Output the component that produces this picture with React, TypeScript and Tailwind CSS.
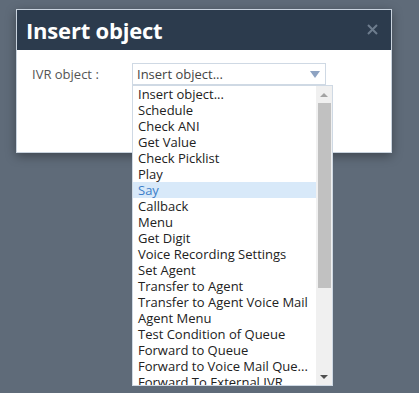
const OPTIONS = [
  "Insert object...",
  "Schedule",
  "Check ANI",
  "Get Value",
  "Check Picklist",
  "Play",
  "Say",
  "Callback",
  "Menu",
  "Get Digit",
  "Voice Recording Settings",
  "Set Agent",
  "Transfer to Agent",
  "Transfer to Agent Voice Mail",
  "Agent Menu",
  "Test Condition of Queue",
  "Forward to Queue",
  "Forward to Voice Mail Que...",
  "Forward To External IVR",
];

export default function App() {
  return (
    <div
      className="w-[419px] h-[393px] bg-[#5f6b79] pl-4 pt-[9px] overflow-hidden"
      style={{ fontFamily: '"Open Sans", sans-serif' }}
    >
      <div className="w-[376px] border border-[#c9d3de] bg-white shadow-[0_3px_10px_rgba(0,0,0,0.35)]">
        {/* Header */}
        <div className="h-[40px] bg-[#2c3b4d] flex items-center justify-between pl-[9px] pr-[13px]">
          <h1 className="text-white font-bold text-[22px] leading-none tracking-[-0.2px] -mt-[1px]">
            Insert object
          </h1>
          <svg width="11" height="11" viewBox="0 0 11 11" className="-mt-[2px]">
            <path d="M1 1 L10 10 M10 1 L1 10" stroke="#6d7c8d" strokeWidth="2" />
          </svg>
        </div>

        {/* Body */}
        <div className="h-[102px] flex items-start pt-[13px] pl-[15px]">
          <label className="w-[100px] text-[13px] text-[#555] leading-[22px]">
            IVR object :
          </label>
          <div className="relative">
            <div className="w-[194px] h-[22px] border border-[#cfd9e4] flex items-center justify-between pl-[4px] pr-[4px]">
              <span className="text-[13px] text-[#444] leading-none">Insert object...</span>
              <svg width="10" height="7" viewBox="0 0 10 7" className="mr-[1px]">
                <path d="M0 0 H10 L5 7 Z" fill="#8ea3c2" />
              </svg>
            </div>

            {/* Dropdown list */}
            <div className="absolute left-0 top-[22px] z-10 w-[201px] h-[301px] border border-[#cfd9e4] bg-white flex">
              <ul className="flex-1 overflow-hidden">
                {OPTIONS.map((o, i) => (
                  <li
                    key={o}
                    className={`h-[16px] leading-[16px] text-[13px] pl-[5px] whitespace-nowrap ${
                      i === 6 ? "bg-[#d8e9f9] text-[#3d7ec9]" : "text-[#222]"
                    }`}
                  >
                    {o}
                  </li>
                ))}
              </ul>
              <div className="w-[16px] bg-[#f0f0f0] flex flex-col items-center">
                <div className="h-[17px] flex items-center justify-center">
                  <svg width="8" height="4" viewBox="0 0 8 4">
                    <path d="M0 4 H8 L4 0 Z" fill="#a3a3a3" />
                  </svg>
                </div>
                <div className="w-[13px] h-[185px] bg-[#c1c1c1] ml-[1px]" />
                <div className="flex-1" />
                <div className="h-[17px] flex items-center justify-center">
                  <svg width="8" height="4" viewBox="0 0 8 4">
                    <path d="M0 0 H8 L4 4 Z" fill="#505050" />
                  </svg>
                </div>
              </div>
            </div>
          </div>
        </div>
      </div>
    </div>
  );
}
